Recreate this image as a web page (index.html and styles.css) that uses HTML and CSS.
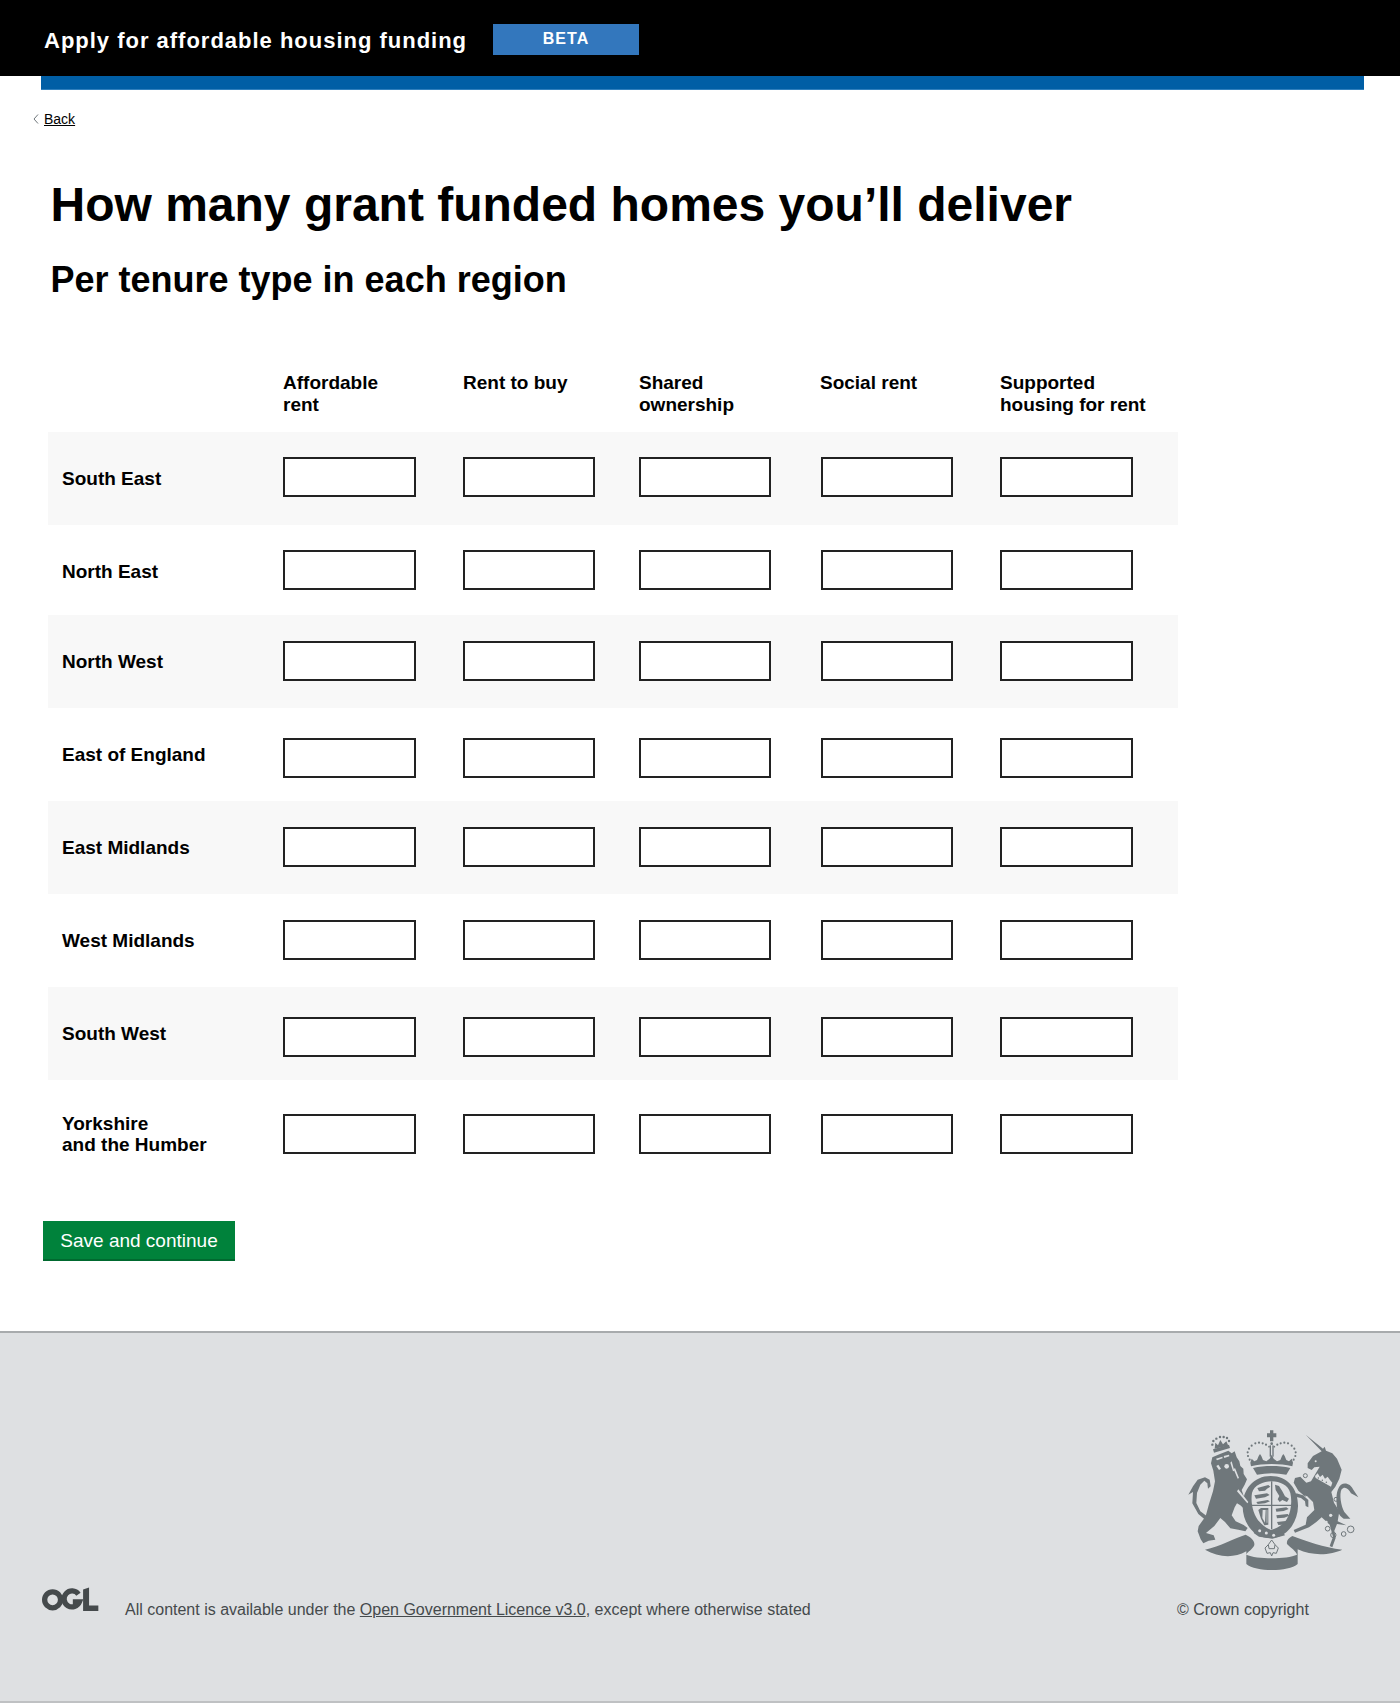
FILE: index.html
```html
<!DOCTYPE html>
<html lang="en">
<head>
<meta charset="utf-8">
<title>How many grant funded homes you'll deliver</title>
<link rel="stylesheet" href="styles.css">
</head>
<body>
<header class="site-header">
  <span class="service-name">Apply for affordable housing funding</span>
  <span class="phase-tag">BETA</span>
</header>
<div class="header-bar"></div>
<nav class="back-nav">
  <svg class="back-chevron" viewBox="0 0 6 10" width="6" height="10" aria-hidden="true"><path d="M5 .5 1 5l4 4.5" fill="none" stroke="#6f777b" stroke-width="1"/></svg>
  <a class="back-link" href="#">Back</a>
</nav>
<main class="main">
  <h1 class="title">How many grant funded homes you’ll deliver</h1>
  <h2 class="subtitle">Per tenure type in each region</h2>
  <form class="homes-form">
    <div class="grid-row grid-head">
      <div></div>
      <div class="col-head">Affordable<br>rent</div>
      <div class="col-head">Rent to buy</div>
      <div class="col-head">Shared<br>ownership</div>
      <div class="col-head col-head-social">Social rent</div>
      <div class="col-head">Supported<br>housing for rent</div>
    </div>
    <div class="grid-row row-shaded inputs-25">
      <div class="region">South East</div>
      <input class="num" type="text"><input class="num" type="text"><input class="num" type="text"><input class="num" type="text"><input class="num" type="text">
    </div>
    <div class="grid-row row-short inputs-25">
      <div class="region">North East</div>
      <input class="num" type="text"><input class="num" type="text"><input class="num" type="text"><input class="num" type="text"><input class="num" type="text">
    </div>
    <div class="grid-row row-shaded inputs-26">
      <div class="region">North West</div>
      <input class="num" type="text"><input class="num" type="text"><input class="num" type="text"><input class="num" type="text"><input class="num" type="text">
    </div>
    <div class="grid-row inputs-30">
      <div class="region">East of England</div>
      <input class="num" type="text"><input class="num" type="text"><input class="num" type="text"><input class="num" type="text"><input class="num" type="text">
    </div>
    <div class="grid-row row-shaded inputs-26">
      <div class="region">East Midlands</div>
      <input class="num" type="text"><input class="num" type="text"><input class="num" type="text"><input class="num" type="text"><input class="num" type="text">
    </div>
    <div class="grid-row inputs-26">
      <div class="region">West Midlands</div>
      <input class="num" type="text"><input class="num" type="text"><input class="num" type="text"><input class="num" type="text"><input class="num" type="text">
    </div>
    <div class="grid-row row-shaded inputs-30">
      <div class="region">South West</div>
      <input class="num" type="text"><input class="num" type="text"><input class="num" type="text"><input class="num" type="text"><input class="num" type="text">
    </div>
    <div class="grid-row row-last inputs-34">
      <div class="region region-two-line">Yorkshire<br>and the Humber</div>
      <input class="num" type="text"><input class="num" type="text"><input class="num" type="text"><input class="num" type="text"><input class="num" type="text">
    </div>
    <button class="save-button" type="button">Save and continue</button>
  </form>
</main>
<footer class="site-footer">
  <div class="licence">
    <svg class="ogl" viewBox="60 48 175 74" width="58" height="25" aria-label="OGL" role="img">
      <circle cx="95" cy="86" r="24" fill="none" stroke="#454a4c" stroke-width="16"/>
      <path d="M173 69A24 24 0 1 0 176 92H156" fill="none" stroke="#454a4c" stroke-width="16"/>
      <path d="M187 55 205 49V103H233V120H187Z" fill="#454a4c"/>
    </svg>
    <p class="licence-text">All content is available under the <a href="#">Open Government Licence v3.0</a>, except where otherwise stated</p>
  </div>
  <div class="crown">
    <svg class="crest" viewBox="0 0 525 435" aria-label="Royal coat of arms" role="img">
      <g fill="#6f777b">
        <!-- lion tail -->
        <path d="M10 200 24 175 38 155 60 148 74 155 77 175 69 182 67 166 58 158 46 170 36 195 34 225 46 250 70 268 66 280 40 258 22 226 24 192Z"/>
        <!-- garter ring -->
        <path fill-rule="evenodd" d="M257 144C310 144 340 185 339 235 338 285 305 328 258 331 205 330 173 285 173 235 173 185 205 144 257 144ZM260 160C235 160 207 172 201 195 196 225 205 262 225 283 235 294 248 302 258 306 275 302 295 290 305 274 318 252 322 222 316 195 310 172 285 160 260 160Z"/>
        <!-- lion -->
        <path d="M82 88 105 78 130 68 140 76 149 70 155 88 163 100 166 114 175 122 176 138 186 154 179 170 170 186 176 204 192 224 198 240 191 250 178 243 166 232 156 226 149 238 140 262 152 280 176 291 188 300 181 310 160 305 136 301 120 282 106 270 88 294 63 315 86 322 91 335 71 338 55 346 47 334 38 310 41 294 62 265 72 228 84 190 90 160 85 128 78 106Z"/>
        <g fill="#dee0e2">
          <path d="M93 92 112 86 113 91 96 97Z"/>
          <path d="M116 84 132 80 133 85 118 90Z"/>
          <circle cx="125" cy="115" r="7"/>
          <path d="M100 110 108 122 102 126 94 114Z"/>
          <path d="M160 184 190 222 187 226 156 190Z"/>
          <path d="M162 230 170 250 165 254 154 236Z"/>
          <path d="M140 100 148 128 144 130 136 104Z"/>
          <path d="M150 120 162 150 158 152 146 124Z"/>
        </g>
        <!-- lion crown -->
        <path d="M84 64 132 50 135 60 87 74Z"/>
        <path d="M89 62 91 44 99 52 106 36 114 49 124 40 130 53Z"/>
        <circle cx="82" cy="50" r="3.6"/><circle cx="85" cy="39" r="3.6"/><circle cx="94" cy="32" r="3.6"/><circle cx="105" cy="27" r="3.6"/><circle cx="116" cy="27" r="3.6"/><circle cx="126" cy="30" r="3.6"/><circle cx="132" cy="39" r="3.6"/>
        <!-- crown -->
        <path d="M255 7H265V16H274V28H265V40H255V28H246V16H255Z"/>
        <circle cx="260" cy="47" r="4"/>
        <rect x="254" y="52" width="4" height="34"/><rect x="262" y="52" width="4" height="34"/>
        <circle cx="194" cy="95" r="3.2"/><circle cx="189" cy="84" r="3.2"/><circle cx="188" cy="73" r="3.2"/><circle cx="192" cy="62" r="3.2"/><circle cx="200" cy="53" r="3.2"/><circle cx="211" cy="46" r="3.2"/><circle cx="222" cy="44" r="3.2"/><circle cx="233" cy="46" r="3.2"/><circle cx="243" cy="50" r="3.2"/><circle cx="252" cy="56" r="2.6"/>
        <circle cx="326" cy="95" r="3.2"/><circle cx="331" cy="84" r="3.2"/><circle cx="332" cy="73" r="3.2"/><circle cx="328" cy="62" r="3.2"/><circle cx="320" cy="53" r="3.2"/><circle cx="309" cy="46" r="3.2"/><circle cx="298" cy="44" r="3.2"/><circle cx="287" cy="46" r="3.2"/><circle cx="277" cy="50" r="3.2"/><circle cx="268" cy="56" r="2.6"/>
        <path d="M196 104 200 92 208 100 216 96 221 84 225 78 229 84 234 96 244 100 254 92 260 80 266 92 276 100 286 96 291 84 295 78 299 84 304 96 312 100 320 92 324 104 322 115C285 106 235 106 198 115Z"/>
        <path d="M204 120C240 112 280 112 316 120L304 140C275 134 245 134 216 140Z"/>
        <!-- shield details -->
        <path d="M258 160H262V304H258ZM198 230H320V234H198Z"/>
        <path d="M217 180 250 171 256 176 246 182 240 188 222 190ZM208 202 246 196 254 201 240 208 213 212ZM214 222 248 216 255 220 240 226 218 228Z"/>
        <path d="M270 170 282 174 292 190 300 205 312 212 306 222 292 216 284 222 278 214 283 204 272 186Z"/>
        <path d="M272 242 304 238 311 243 296 249 274 251ZM274 262 308 258 313 263 298 269 276 271ZM276 282 302 279 306 284 292 290 280 291Z"/>
        <path fill-rule="evenodd" d="M228 240 250 240 250 290 238 292 228 272 220 246ZM233 246 232 270 240 284 242 246ZM245 246V284H247V246Z"/>
        <!-- buckle strap -->
        <path d="M205 302 218 292 232 300 296 316 300 322 262 332 222 326 207 316Z"/>
        <g fill="#dee0e2"><circle cx="224" cy="308" r="4.5"/><circle cx="244" cy="315" r="4.5"/><circle cx="266" cy="322" r="4.5"/></g>
        <!-- unicorn -->
        <path d="M362 20 414 62 419 56 423 68 442 76 456 92 470 125 463 152 451 176 439 192 447 224 463 250 458 280 484 292 456 288 448 308 452 330 442 358 434 354 444 326 434 290 410 268 394 282 372 298 330 314 326 306 362 290 366 268 388 246 384 222 366 204 354 200 340 188 326 164 330 150 346 146 364 164 378 160 396 130 404 116 388 118 380 126 368 120 368 106 384 84 410 70Z"/>
        <path d="M334 196 354 202 370 216 370 238 362 234 360 220 348 210 330 206Z"/>
        <path d="M458 250C452 215 452 185 468 170 482 162 498 170 504 184L520 208 498 196C490 180 478 174 470 184 462 198 468 235 478 252L496 272 476 272C468 268 462 260 458 250Z"/>
        <!-- ribbon -->
        <path d="M60 365C105 355 150 330 182 320 200 328 212 342 207 354 196 370 186 372 184 380 215 394 305 394 336 380 334 370 318 360 306 348 304 338 310 330 322 324 365 340 415 358 472 365 440 380 385 386 338 364V408C310 432 212 432 184 408V370C145 392 100 388 60 365Z"/>
        <!-- rose -->
        <path fill="none" stroke="#6f777b" stroke-width="3" d="M260 336 250 350 240 360 246 376 256 374 260 384 264 374 274 376 280 360 270 350ZM250 350 252 362H268L270 350"/>
      </g>
      <g fill="none" stroke="#6f777b" stroke-width="3">
        <circle cx="361" cy="143" r="6"/><circle cx="361" cy="198" r="6"/><circle cx="453" cy="214" r="6"/><circle cx="428" cy="302" r="7"/><circle cx="445" cy="321" r="8"/><circle cx="476" cy="318" r="7"/><circle cx="497" cy="304" r="10"/>
      </g>
      <g fill="#dee0e2">
        <circle cx="392" cy="100" r="3"/>
        <path d="M390 144 398 136 405 147 413 140 420 152 428 146 435 156 442 164 438 176 392 150Z"/>
        <circle cx="437" cy="262" r="5"/><circle cx="424" cy="282" r="4"/>
      </g>
      <g fill="#6f777b"><circle cx="400" cy="150" r="2.2"/><circle cx="412" cy="157" r="2.2"/><circle cx="424" cy="163" r="2.2"/></g>
    </svg>
    <p class="copyright">© Crown copyright</p>
  </div>
</footer>
</body>
</html>
```
FILE: styles.css
```css
* { box-sizing: border-box; }
body {
  margin: 0;
  background: #fff;
  color: #000;
  font-family: "Liberation Sans", Arial, sans-serif;
}
.site-header {
  display: flex;
  align-items: flex-start;
  height: 76px;
  background: #000;
  padding: 24px 0 0 44px;
}
.service-name {
  color: #fff;
  font-size: 22px;
  line-height: 34px;
  font-weight: 700;
  letter-spacing: .99px;
  width: 449px;
  white-space: nowrap;
}
.phase-tag {
  width: 146px;
  height: 31px;
  background: #3377bd;
  color: #fff;
  font-size: 16px;
  line-height: 29px;
  font-weight: 700;
  letter-spacing: 1px;
  text-align: center;
}
.header-bar {
  height: 14px;
  margin: 0 36px 0 41px;
  background: #005ea5;
  border-bottom: 1px solid #2f7fbd;
}
.back-nav {
  display: flex;
  align-items: center;
  gap: 5px;
  padding: 19px 0 0 33px;
  height: 39px;
  font-size: 14px;
}
.back-link { color: #000; line-height: 18px; }
.main { padding: 46px 0 0 43px; height: 1202px; }
.title {
  margin: 0 0 0 7.5px;
  font-size: 48px;
  line-height: 60px;
  font-weight: 700;
}
.subtitle {
  margin: 23px 0 0 7.5px;
  font-size: 36px;
  line-height: 44px;
  font-weight: 700;
}
.grid-row {
  display: grid;
  grid-template-columns: 235px 180px 176px 182px 179px 178px;
  align-items: start;
  width: 1130px;
  height: 93px;
  margin-left: 5px;
}
.grid-head { height: 60px; margin-top: 70px; }
.col-head {
  font-size: 19px;
  line-height: 21.6px;
  font-weight: 700;
}
.col-head-social { margin-left: -1px; }
.row-shaded { background: #f8f8f8; }
.row-short { height: 90px; }
.row-last { height: 111px; }
.region {
  font-size: 19px;
  line-height: 21px;
  font-weight: 700;
  padding: 36px 0 0 14px;
}
.region-two-line { padding-top: 33px; }
.num {
  display: block;
  width: 132px;
  height: 40px;
  margin: 0;
  padding: 0 5px;
  border: 2px solid #222;
  border-radius: 0;
  background: #fff;
  font: inherit;
}
.num:nth-child(2), .num:nth-child(6) { width: 133px; }
.inputs-25 .num { margin-top: 25px; }
.inputs-26 .num { margin-top: 26px; }
.inputs-30 .num { margin-top: 30px; }
.inputs-34 .num { margin-top: 34px; }
.save-button {
  display: block;
  width: 192px;
  height: 40px;
  margin: 30px 0 0;
  padding: 2px 0 0;
  border: 0;
  border-bottom: 2px solid #00692f;
  background: #00823b;
  color: #fff;
  font-family: inherit;
  font-size: 19px;
  line-height: 24px;
}
.site-footer {
  display: flex;
  justify-content: space-between;
  align-items: flex-end;
  height: 372px;
  border-top: 2px solid #a8abad;
  border-bottom: 2px solid #bfc1c3;
  background: #dee0e2;
  color: #454a4c;
  font-size: 16px;
  padding: 0 40px 81px 41px;
}
.licence { display: flex; align-items: flex-end; gap: 26px; }
.ogl { display: block; margin-bottom: 8px; }
.licence-text { margin: 0; line-height: 20px; }
.licence-text a { color: inherit; }
.crown { display: flex; flex-direction: column; width: 183px; }
.crest { display: block; width: 175px; height: 145px; margin: 0 0 27px 8px; }
.copyright { margin: 0; line-height: 20px; }
```
